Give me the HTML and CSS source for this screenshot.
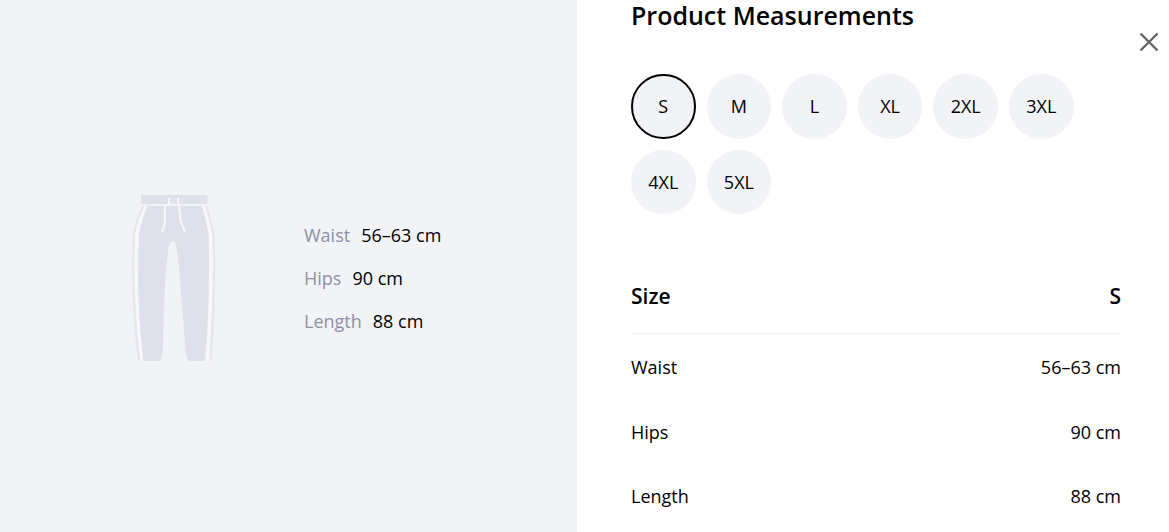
FILE: index.html
```html
<!DOCTYPE html>
<html lang="en">
<head>
  <meta charset="UTF-8">
  <meta name="viewport" content="width=device-width, initial-scale=1.0">
  <title>Product Measurements</title>
  <link rel="stylesheet" href="styles.css">
</head>
<body>
  <div class="sizeGuide">
    <div class="preview">
      <svg class="pants" viewBox="130 190 88 175" width="88" height="175" aria-hidden="true">
        <path class="pantsEdge" d="M143.5 206 Q136 222 134 234 Q132.5 270 134 300 Q136 335 139 360"/>
        <path class="pantsEdge" d="M206 206 Q211 222 213.5 234 Q214.5 270 213.5 300 Q212.5 335 210.5 360"/>
        <path class="pantsStripe" d="M146 206 Q139 222 137 234 Q135.5 270 137 300 Q139 335 142 361"/>
        <path class="pantsStripe" d="M203.5 206 Q208 222 210.5 234 Q211.5 270 210.5 300 Q209.5 335 207 361"/>
        <rect class="pantsFill" x="141" y="195" width="66.5" height="9"/>
        <path class="pantsFill" d="M147.5 206 Q141 222 139 234 Q137.5 270 138.5 300 Q140 335 143.5 361 L160 361 Q162 358 163 345 Q164 300 166 270 Q168 248 170 243 Q172 240 175 242 Q178 250 180 280 L186 355 Q187 360 189 361 L205 361 Q207 340 208 313 Q209.5 270 208.5 234 Q206 220 202 206 Z"/>
        <path class="pantsCord" d="M169 198 V204 M165 206 V223 L162 232"/>
        <path class="pantsCord" d="M178 198 L180.5 220 L185 232"/>
      </svg>
      <dl class="specs">
        <div class="spec"><dt>Waist</dt><dd>56–63 cm</dd></div>
        <div class="spec"><dt>Hips</dt><dd>90 cm</dd></div>
        <div class="spec"><dt>Length</dt><dd>88 cm</dd></div>
      </dl>
    </div>
    <div class="panel">
      <h2 class="title">Product Measurements</h2>
      <button class="close" aria-label="Close">
        <svg viewBox="0 0 20 20" width="20" height="20"><path d="M1.5 1.5 L18.5 18.5 M18.5 1.5 L1.5 18.5"/></svg>
      </button>
      <div class="sizes">
        <button class="size active">S</button>
        <button class="size">M</button>
        <button class="size">L</button>
        <button class="size">XL</button>
        <button class="size">2XL</button>
        <button class="size">3XL</button>
        <button class="size">4XL</button>
        <button class="size">5XL</button>
      </div>
      <div class="row rowHead"><span>Size</span><span>S</span></div>
      <div class="row"><span>Waist</span><span>56–63 cm</span></div>
      <div class="row"><span>Hips</span><span>90 cm</span></div>
      <div class="row"><span>Length</span><span>88 cm</span></div>
    </div>
  </div>
</body>
</html>
```
FILE: styles.css
```css
html, body {
  height: 100%;
}
body {
  margin: 0;
  overflow: hidden;
  font-family: "Open Sans", "Noto Sans", Arial, sans-serif;
  font-size: 18px;
  color: #000;
  background-color: #fff;
}
.sizeGuide {
  display: flex;
  height: 532px;
}
.preview {
  width: 577px;
  flex: none;
  box-sizing: border-box;
  padding: 22px 0 0 130px;
  display: flex;
  align-items: center;
  background-color: #f2f3f7;
}
.pants {
  flex: none;
}
.pantsFill {
  fill: #dfe0e9;
}
.pantsEdge {
  fill: none;
  stroke: #e6e7ee;
  stroke-width: 2.5;
}
.pantsStripe {
  fill: none;
  stroke: #f7f8fa;
  stroke-width: 3;
}
.pantsCord {
  fill: none;
  stroke: #f6f7fa;
  stroke-width: 2;
}
.specs {
  margin: 2px 0 0 86px;
  display: flex;
  flex-direction: column;
  gap: 20px;
}
.spec {
  display: flex;
  gap: 11px;
  line-height: 23px;
}
.spec dt {
  color: #8f90a6;
}
.spec dd {
  margin: 0;
}
.panel {
  position: relative;
  flex: 1;
  padding: 0 48px 0 54px;
}
.title {
  margin: -1px 0 0;
  font-size: 25px;
  line-height: 32px;
  font-weight: 600;
}
.close {
  position: absolute;
  top: 32px;
  left: 562px;
  padding: 0;
  border: none;
  background: none;
  cursor: pointer;
}
.close svg {
  display: block;
}
.close path {
  fill: none;
  stroke: #666;
  stroke-width: 2.4;
}
.sizes {
  display: flex;
  flex-wrap: wrap;
  gap: 11px;
  margin-top: 43px;
  margin-bottom: 52px;
}
.size {
  width: 64.6px;
  height: 64.6px;
  padding: 0;
  border: none;
  border-radius: 50%;
  background-color: #f2f3f7;
  font-family: inherit;
  font-size: 18px;
  color: #000;
  cursor: pointer;
}
.size.active {
  border: 2px solid #000;
}
.row {
  display: flex;
  justify-content: space-between;
  align-items: center;
  height: 64.5px;
}
.rowHead {
  box-sizing: border-box;
  height: 68px;
  margin-bottom: 1px;
  padding-bottom: 8px;
  font-size: 21px;
  font-weight: 600;
  border-bottom: 1px solid #eff0f4;
}
```
